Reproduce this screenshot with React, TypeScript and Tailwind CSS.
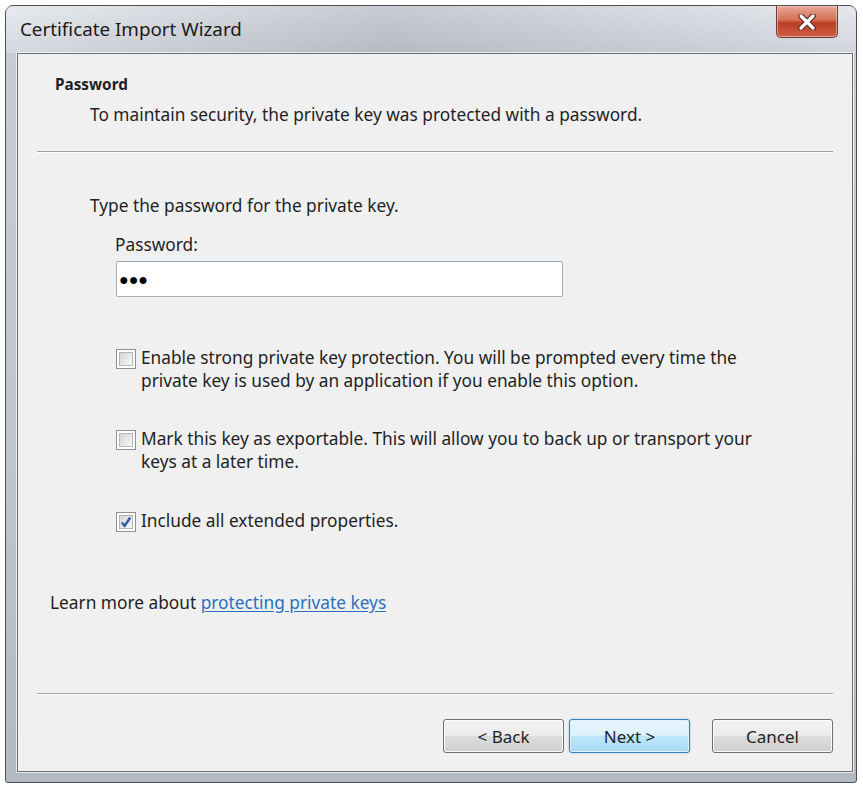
import React from 'react';

const font = { fontFamily: '"Noto Sans", "Open Sans", Arial, sans-serif' };

const CheckBox: React.FC<{ checked?: boolean }> = ({ checked }) => (
  <div className="w-[20px] h-[20px] shrink-0 border border-[#8e8f8f] bg-white p-[2px] mt-[3px]">
    <div className="w-full h-full border border-[#b4b7ba] bg-gradient-to-br from-[#d2d4d6] to-[#f8f8f8] flex items-center justify-center">
      {checked && (
        <svg width="12" height="12" viewBox="0 0 12 12">
          <path d="M1.8 6.5 L4.6 10 L10.2 1.5" fill="none" stroke="#3b5aa0" strokeWidth="2.4" strokeLinejoin="round" />
        </svg>
      )}
    </div>
  </div>
);

const Option: React.FC<{ checked?: boolean; lines: string[]; className?: string }> = ({ checked, lines, className }) => (
  <div className={`flex gap-[5px] ml-[98px] ${className ?? ''}`}>
    <CheckBox checked={checked} />
    <div className="text-[17.3px] leading-[23px] text-[#1f1f1f]">
      {lines.map((l, i) => (
        <div key={i}>{l}</div>
      ))}
    </div>
  </div>
);

const Button: React.FC<{ label: string; primary?: boolean; className?: string }> = ({ label, primary, className }) => (
  <div
    className={`w-[121px] h-[34px] rounded-[3px] border flex items-center justify-center pt-[2px] text-[17px] text-[#1f1f1f] ${
      primary
        ? 'border-[#3c7fb1] bg-[linear-gradient(to_bottom,#eaf6fd_0%,#d9f0fc_50%,#bee6fd_51%,#a7d9f5_100%)] shadow-[inset_0_0_0_1px_#d9f2ff,0_0_2px_#6fc3f0]'
        : 'border-[#707070] bg-[linear-gradient(to_bottom,#f2f2f2_0%,#ebebeb_50%,#dddddd_51%,#cfcfcf_100%)] shadow-[inset_0_0_0_1px_#fcfcfc]'
    } ${className ?? ''}`}
  >
    {label}
  </div>
);

export default function App() {
  return (
    <div className="w-[863px] h-[789px] bg-white pl-[5px] pt-[5px]" style={font}>
      <div className="w-[852px] h-[778px] rounded-t-[8px] rounded-b-[3px] border border-[#4a4e54] bg-[linear-gradient(to_bottom,#dfe3e8_0%,#c7ccd3_6%,#bfc5cc_60%,#b3b9c1_100%)] flex flex-col">
        <div className="h-[47px] flex items-start justify-between pl-[14px] pr-[18px] bg-[linear-gradient(to_right,rgba(255,255,255,0.25),rgba(110,115,122,0.2)_45%,rgba(255,255,255,0.2))]">
          <div className="mt-[10px] text-[18.8px] leading-[26px] text-[#1a1a1a]">Certificate Import Wizard</div>
          <div className="w-[62px] h-[32px] rounded-b-[5px] border border-t-0 border-[#6b3a30] bg-[linear-gradient(to_bottom,#e8a897_0%,#d46f55_45%,#bd3d25_55%,#cf6045_100%)] shadow-[inset_0_0_0_1px_rgba(255,220,210,0.55)] flex items-center justify-center">
            <svg width="20" height="16" viewBox="0 0 20 16">
              <path d="M4 2 L16 14 M16 2 L4 14" stroke="#5a2a22" strokeWidth="5.5" strokeLinecap="round" />
              <path d="M4 2 L16 14 M16 2 L4 14" stroke="#ffffff" strokeWidth="3.2" strokeLinecap="round" />
            </svg>
          </div>
        </div>
        <div className="ml-[11px] w-[836px] h-[719px] border border-[#6a6e74] shadow-[0_0_0_1px_rgba(255,255,255,0.7)] bg-[#f0f0f0] flex flex-col text-[#1f1f1f]">
          <div className="ml-[37px] mt-[20px] h-[20px] text-[15.3px] leading-[20px] font-bold">Password</div>
          <div className="ml-[72px] mt-[9px] h-[24px] text-[17.3px] leading-[24px]">
            To maintain security, the private key was protected with a password.
          </div>
          <div className="mx-[19px] mt-[24px] h-[2px] border-t border-[#a0a0a0] border-b border-b-white" />
          <div className="ml-[72px] mt-[41px] h-[24px] text-[17.3px] leading-[24px]">Type the password for the private key.</div>
          <div className="ml-[97px] mt-[15px] h-[24px] text-[17.3px] leading-[24px]">Password:</div>
          <div className="ml-[98px] mt-[4px] w-[447px] h-[36px] rounded-[2px] border border-[#abadb3] border-t-[#8fa4b8] bg-white flex items-center pl-[2px]">
            <span className="text-[16px] text-black">●●●</span>
          </div>
          <Option
            className="mt-[49px]"
            lines={[
              'Enable strong private key protection. You will be prompted every time the',
              'private key is used by an application if you enable this option.',
            ]}
          />
          <Option
            className="mt-[35px]"
            lines={['Mark this key as exportable. This will allow you to back up or transport your', 'keys at a later time.']}
          />
          <Option className="mt-[36px]" checked lines={['Include all extended properties.']} />
          <div className="ml-[32px] mt-[59px] h-[24px] text-[17.3px] leading-[24px]">
            Learn more about <span className="text-[#2b6fbf] underline underline-offset-2">protecting private keys</span>
          </div>
          <div className="mx-[19px] mt-[78px] h-[2px] border-t border-[#a0a0a0] border-b border-b-white" />
          <div className="mt-[24px] flex justify-end pr-[19px]">
            <Button label="< Back" />
            <Button label="Next >" primary className="ml-[5px] w-[120px]" />
            <Button label="Cancel" className="ml-[22px] w-[121px]" />
          </div>
        </div>
      </div>
    </div>
  );
}
